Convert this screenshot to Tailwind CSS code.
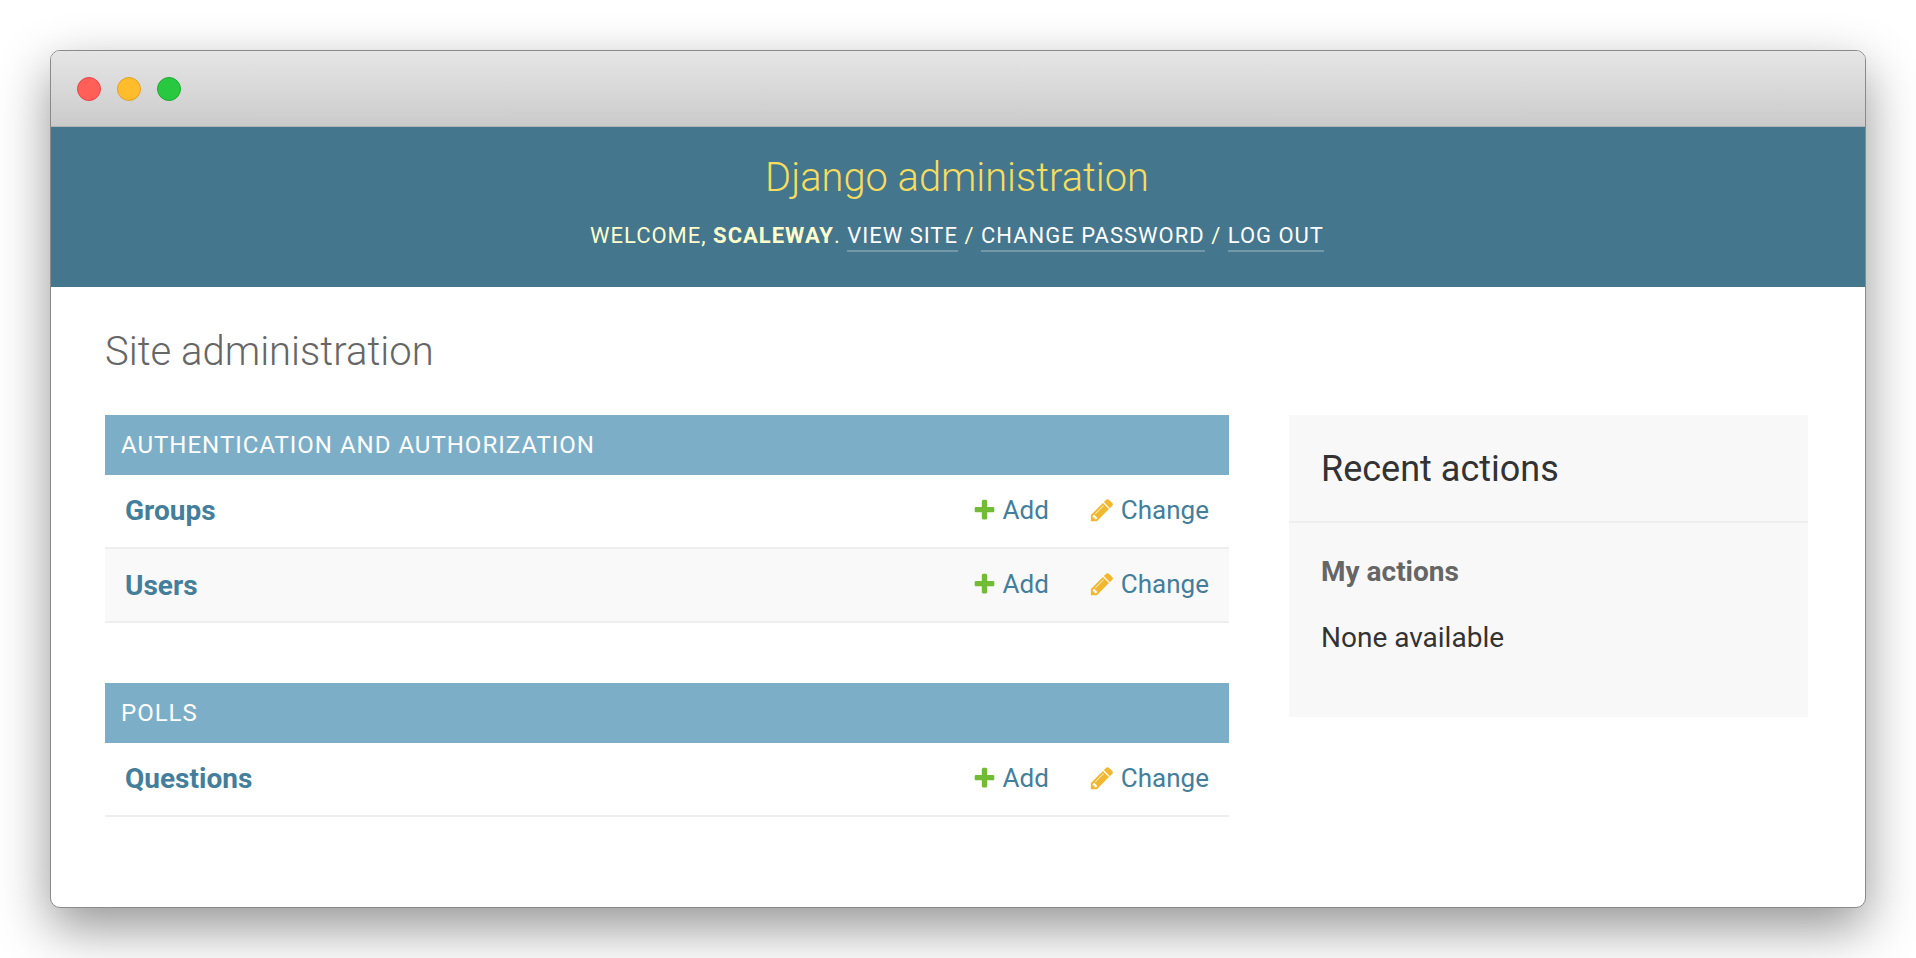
<!DOCTYPE html>
<html lang="en">
  <head>
    <meta charset="UTF-8" />
    <meta name="viewport" content="width=device-width, initial-scale=1.0" />
    <title>Site administration</title>
    <script src="https://cdn.jsdelivr.net/npm/@tailwindcss/browser@4"></script>
  </head>
  <body class="bg-white font-['Roboto',sans-serif] h-[958px] overflow-hidden">
    <div class="pt-[50px] px-[50px]">
      <div class="w-[1816px] h-[858px] rounded-[10px] bg-white border border-[#8a8a8a] overflow-hidden shadow-[0_20px_52px_rgba(0,0,0,0.42)] flex flex-col">
        <!-- title bar -->
        <div class="h-[76px] shrink-0 flex items-center gap-[16px] pl-[26px] bg-linear-to-b from-[#e6e6e6] to-[#cbcbcb] border-b border-[#b4b4b4]">
          <span class="w-6 h-6 rounded-full bg-[#ff5f57] border border-[#e5484d]"></span>
          <span class="w-6 h-6 rounded-full bg-[#ffbd2e] border border-[#e0a028]"></span>
          <span class="w-6 h-6 rounded-full bg-[#28c940] border border-[#20a934]"></span>
        </div>

        <!-- header -->
        <div class="h-[160px] shrink-0 bg-[#44768e] flex flex-col items-center pt-[27px] pr-[2px]">
          <h1 class="text-[39.8px] leading-[48px] font-light text-[#f5dd5d]">Django administration</h1>
          <div class="mt-[19px] text-[22px] leading-[30px] tracking-[1px] uppercase text-[#ffc]">
            Welcome, <strong class="font-bold">scaleway</strong>.
            <a class="text-white border-b-2 border-white/25 pb-[2px]" href="#">View site</a> /
            <a class="text-white border-b-2 border-white/25 pb-[2px]" href="#">Change password</a> /
            <a class="text-white border-b-2 border-white/25 pb-[2px]" href="#">Log out</a>
          </div>
        </div>

        <!-- content -->
        <div class="flex-1 px-[54px] pt-[39px]">
          <h2 class="text-[40px] leading-[52px] font-light text-[#666]">Site administration</h2>
          <div class="flex gap-[60px] mt-[37px]">
            <div class="w-[1124px] flex flex-col gap-[60px]">
              <section>
                <div class="h-[60px] flex items-center px-4 bg-[#7daec7] text-white text-[24px] tracking-[1px] uppercase">Authentication and Authorization</div>
                <div class="h-[74px] flex items-center pl-5 pr-5 border-b-2 border-[#eee]">
                  <a class="flex-1 text-[28px] font-bold text-[#447e9b]" href="#">Groups</a>
                  <a class="flex items-center gap-[6px] pb-[2px] text-[26px] text-[#447e9b]" href="#">
                    <svg class="w-[25px] h-[25px] fill-[#72bb35]" viewBox="0 0 1792 1792"><path d="M1600 736v192q0 40-28 68t-68 28h-416v416q0 40-28 68t-68 28h-192q-40 0-68-28t-28-68v-416h-416q-40 0-68-28t-28-68v-192q0-40 28-68t68-28h416v-416q0-40 28-68t68-28h192q40 0 68 28t28 68v416h416q40 0 68 28t28 68z"/></svg>
                    Add
                  </a>
                  <a class="flex items-center gap-[6px] pb-[2px] ml-[40px] text-[26px] text-[#447e9b]" href="#">
                    <svg class="w-[26px] h-[26px] fill-[#f0b72f]" viewBox="0 0 1792 1792"><path d="M491 1536l91-91-235-235-91 91v107h128v128h107zm523-928q0-22-22-22-10 0-17 7l-542 542q-7 7-7 17 0 22 22 22 10 0 17-7l542-542q7-7 7-17zm-54-192l416 416-832 832h-416v-416zm683 96q0 53-37 90l-166 166-416-416 166-165q36-38 90-38 53 0 91 38l235 234q37 39 37 91z"/></svg>
                    Change
                  </a>
                </div>
                <div class="h-[74px] flex items-center pl-5 pr-5 bg-[#f9f9f9] border-b-2 border-[#eee]">
                  <a class="flex-1 pt-[2px] text-[28px] font-bold text-[#447e9b]" href="#">Users</a>
                  <a class="flex items-center gap-[6px] pb-[2px] text-[26px] text-[#447e9b]" href="#">
                    <svg class="w-[25px] h-[25px] fill-[#72bb35]" viewBox="0 0 1792 1792"><path d="M1600 736v192q0 40-28 68t-68 28h-416v416q0 40-28 68t-68 28h-192q-40 0-68-28t-28-68v-416h-416q-40 0-68-28t-28-68v-192q0-40 28-68t68-28h416v-416q0-40 28-68t68-28h192q40 0 68 28t28 68v416h416q40 0 68 28t28 68z"/></svg>
                    Add
                  </a>
                  <a class="flex items-center gap-[6px] pb-[2px] ml-[40px] text-[26px] text-[#447e9b]" href="#">
                    <svg class="w-[26px] h-[26px] fill-[#f0b72f]" viewBox="0 0 1792 1792"><path d="M491 1536l91-91-235-235-91 91v107h128v128h107zm523-928q0-22-22-22-10 0-17 7l-542 542q-7 7-7 17 0 22 22 22 10 0 17-7l542-542q7-7 7-17zm-54-192l416 416-832 832h-416v-416zm683 96q0 53-37 90l-166 166-416-416 166-165q36-38 90-38 53 0 91 38l235 234q37 39 37 91z"/></svg>
                    Change
                  </a>
                </div>
              </section>
              <section>
                <div class="h-[60px] flex items-center px-4 bg-[#7daec7] text-white text-[24px] tracking-[1px] uppercase">Polls</div>
                <div class="h-[74px] flex items-center pl-5 pr-5 border-b-2 border-[#eee]">
                  <a class="flex-1 text-[28px] font-bold text-[#447e9b]" href="#">Questions</a>
                  <a class="flex items-center gap-[6px] pb-[2px] text-[26px] text-[#447e9b]" href="#">
                    <svg class="w-[25px] h-[25px] fill-[#72bb35]" viewBox="0 0 1792 1792"><path d="M1600 736v192q0 40-28 68t-68 28h-416v416q0 40-28 68t-68 28h-192q-40 0-68-28t-28-68v-416h-416q-40 0-68-28t-28-68v-192q0-40 28-68t68-28h416v-416q0-40 28-68t68-28h192q40 0 68 28t28 68v416h416q40 0 68 28t28 68z"/></svg>
                    Add
                  </a>
                  <a class="flex items-center gap-[6px] pb-[2px] ml-[40px] text-[26px] text-[#447e9b]" href="#">
                    <svg class="w-[26px] h-[26px] fill-[#f0b72f]" viewBox="0 0 1792 1792"><path d="M491 1536l91-91-235-235-91 91v107h128v128h107zm523-928q0-22-22-22-10 0-17 7l-542 542q-7 7-7 17 0 22 22 22 10 0 17-7l542-542q7-7 7-17zm-54-192l416 416-832 832h-416v-416zm683 96q0 53-37 90l-166 166-416-416 166-165q36-38 90-38 53 0 91 38l235 234q37 39 37 91z"/></svg>
                    Change
                  </a>
                </div>
              </section>
            </div>

            <!-- recent actions -->
            <div class="w-[519px] h-[302px] bg-[#f8f8f8]">
              <h2 class="h-[108px] pt-[2px] px-[32px] flex items-center text-[36px] text-[#333] border-b-2 border-[#eee]">Recent actions</h2>
              <h3 class="mt-[33px] px-[32px] text-[28px] leading-[32px] font-bold text-[#666]">My actions</h3>
              <p class="mt-[34px] px-[32px] text-[28px] leading-[32px] text-[#333]">None available</p>
            </div>
          </div>
        </div>
      </div>
    </div>
  </body>
</html>
